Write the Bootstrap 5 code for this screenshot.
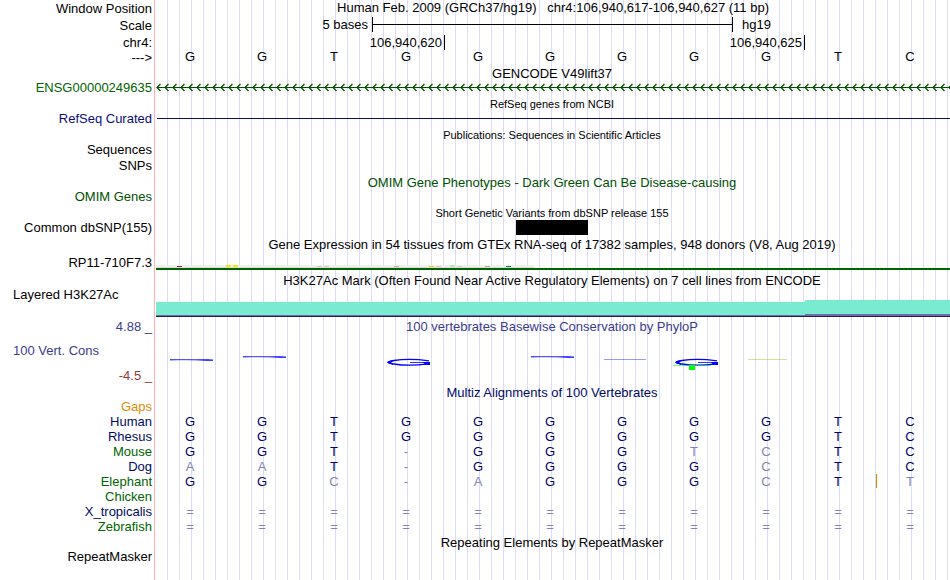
<!DOCTYPE html>
<html lang="en">
<head>
<meta charset="utf-8">
<meta name="viewport" content="width=device-width, initial-scale=1">
<title>Genome Browser - chr4:106,940,617-106,940,627</title>
<link href="https://cdn.jsdelivr.net/npm/bootstrap@5.3.0/dist/css/bootstrap.min.css" rel="stylesheet">
<style>
  body { font: 13px/15px "Liberation Sans", Arial, sans-serif; color: #000; background: #fff; }
  .browser {
    --label: 154px;
    background:
      linear-gradient(#ffb0b0, #ffb0b0) var(--label) 0 / 1px 100% no-repeat,
      repeating-linear-gradient(to right, transparent 0 11px, #dcdcf5 11px 12px) 156px 0 no-repeat;
  }
  .track { display: flex; min-height: 17px; }
  .track-name { flex: 0 0 156px; padding-right: 4px; text-align: right; white-space: nowrap; }
  .track-name.start { text-align: left; padding-left: 13px; }
  .track-data { flex: 1 1 0; min-width: 0; }
  .ruler .track-name { padding-top: 1px; }
  .track-title { height: 14px; margin: 0 2px 0 156px; font-size: 13px; font-weight: 400; line-height: 16px; text-align: center; white-space: nowrap; }
  .track-title.minor { font-size: 11px; line-height: 14px; }
  .bases { display: grid; grid-template-columns: repeat(11, 1fr); padding-right: 2px; }
  .letters { text-align: center; }
  .letters span { padding-right: 4px; }
  .span-3 { grid-column: span 3; } .span-4 { grid-column: span 4; } .span-5 { grid-column: span 5; }
  .before { text-align: right; padding-right: 4px; }
  .before.near { padding-right: 2px; }
  .tick { border-left: 1px solid #000; }
  .scale-line { height: 15px; border: solid #000; border-width: 0 0 0 1px; background: linear-gradient(#000, #000) 0 7px / 100% 1px no-repeat; }
  .scale-end { height: 15px; padding-left: 9px; }
  .snp { grid-column: 6; height: 15px; background: #000; }
  .h-14 { height: 14px; min-height: 0; } .h-16 { height: 16px; min-height: 0; } .h-18 { height: 18px; } .h-32 { height: 32px; }
  .refseq-line { height: 1px; margin: 7px 0 0 1px; background: #0c0c78; }
  svg { display: block; width: 100%; }
  .axis { height: 25px; }
  .axis.top { height: 24px; }
  .green { color: #006400; } .navy { color: #000a64; } .blue { color: #0c0c78; }
  .forest { color: #005000; } .slate { color: #3c3c8c; } .brown { color: #8c3c3c; } .orange { color: #e68a00; }
  .alignment table { width: 100%; table-layout: fixed; border-collapse: collapse; }
  .alignment .rows { padding-right: 2px; }
  .alignment th { width: 156px; height: 15px; padding: 0 4px 0 0; font-weight: 400; text-align: right; }
  .alignment td { height: 15px; padding: 0 4px 0 0; text-align: center; color: #000064; }
  .alignment td.off, .alignment tr.off td { color: #8585b2; }
  .alignment td.insert { background: linear-gradient(#e68200, #e68200) 0 0 / 1px 14px no-repeat; }
  .repeats { padding-top: 1px; }
</style>
<script src="https://cdn.jsdelivr.net/npm/bootstrap@5.3.0/dist/js/bootstrap.bundle.min.js"></script>
</head>
<body>
<main class="browser min-vh-100 overflow-hidden">

  <section class="ruler">
    <div class="track">
      <div class="track-name">Window Position</div>
      <div class="track-data text-center">Human Feb. 2009 (GRCh37/hg19) &nbsp; chr4:106,940,617-106,940,627 (11 bp)</div>
    </div>
    <div class="track h-18">
      <div class="track-name">Scale</div>
      <div class="track-data bases">
        <div class="span-3 before">5 bases</div>
        <div class="span-5 scale-line"></div>
        <div class="span-3 tick scale-end">hg19</div>
      </div>
    </div>
    <div class="track h-14">
      <div class="track-name pt-0">chr4:</div>
      <div class="track-data bases">
        <div class="span-4 before near">106,940,620</div>
        <div class="span-5 tick before near">106,940,625</div>
        <div class="tick"></div>
      </div>
    </div>
    <div class="track">
      <div class="track-name">---&gt;</div>
      <div class="track-data bases letters">
        <span>G</span><span>G</span><span>T</span><span>G</span><span>G</span><span>G</span><span>G</span><span>G</span><span>G</span><span>T</span><span>C</span>
      </div>
    </div>
  </section>

  <section>
    <h2 class="track-title">GENCODE V49lift37</h2>
    <div class="track green">
      <div class="track-name">ENSG00000249635</div>
      <div class="track-data">
        <svg height="15" aria-hidden="true">
          <defs>
            <pattern id="strand" width="8" height="15" patternUnits="userSpaceOnUse">
              <path d="M4.500 4 1 7.500 4.500 11" fill="none" stroke="#005000" stroke-width="1.300"/>
            </pattern>
          </defs>
          <rect width="100%" height="15" fill="url(#strand)"/>
          <rect x="1" y="7" width="100%" height="1" fill="#005000"/>
        </svg>
      </div>
    </div>
  </section>

  <section>
    <h2 class="track-title minor">RefSeq genes from NCBI</h2>
    <div class="track blue">
      <div class="track-name">RefSeq Curated</div>
      <div class="track-data"><div class="refseq-line"></div></div>
    </div>
  </section>

  <section>
    <h2 class="track-title minor">Publications: Sequences in Scientific Articles</h2>
    <div class="track h-16"><div class="track-name">Sequences</div></div>
    <div class="track"><div class="track-name">SNPs</div></div>
  </section>

  <section class="forest">
    <h2 class="track-title">OMIM Gene Phenotypes - Dark Green Can Be Disease-causing</h2>
    <div class="track"><div class="track-name">OMIM Genes</div></div>
  </section>

  <section>
    <h2 class="track-title minor">Short Genetic Variants from dbSNP release 155</h2>
    <div class="track">
      <div class="track-name">Common dbSNP(155)</div>
      <div class="track-data bases"><div class="snp"></div></div>
    </div>
  </section>

  <section>
    <h2 class="track-title h-18">Gene Expression in 54 tissues from GTEx RNA-seq of 17382 samples, 948 donors (V8, Aug 2019)</h2>
    <div class="track h-18">
      <div class="track-name">RP11-710F7.3</div>
      <div class="track-data">
        <svg height="18" viewBox="0 0 794 18" preserveAspectRatio="none" shape-rendering="crispEdges" aria-hidden="true">
          <rect y="10" width="378" height="2" fill="#f0f0f0"/>
          <rect y="12" width="378" height="1" fill="#dcdcdc"/>
          <rect x="21" y="11" width="5" height="1" fill="#8b1c62"/>
          <path fill="#eeee00" d="M70 10h5v2h-5zM77 10h5v2h-5z"/>
          <path fill="#dcc8c8" d="M161 11h5v1h-5zM168 11h5v1h-5z"/>
          <path fill="#bdb094" d="M238 11h5v1h-5zM329 11h5v1h-5z"/>
          <rect x="273" y="11" width="5" height="1" fill="#f0d000"/>
          <rect x="280" y="11" width="5" height="1" fill="#ffb6c1"/>
          <rect x="294" y="10" width="5" height="2" fill="#b4eeb4"/>
          <rect x="301" y="11" width="5" height="1" fill="#d3d3d3"/>
          <rect x="350" y="11" width="5" height="1" fill="#008b45"/>
          <rect y="13" width="794" height="2" fill="#006400"/>
        </svg>
      </div>
    </div>
  </section>

  <section>
    <h2 class="track-title">H3K27Ac Mark (Often Found Near Active Regulatory Elements) on 7 cell lines from ENCODE</h2>
    <div class="track h-32">
      <div class="track-name start">Layered H3K27Ac</div>
      <div class="track-data">
        <svg height="32" viewBox="0 0 794 32" preserveAspectRatio="none" shape-rendering="crispEdges" aria-hidden="true">
          <path fill="#78ebd0" d="M0 15h649v-2h145v16H0z"/>
          <path fill="#6e6eaa" d="M0 28h649v-1h145v2H0z"/>
          <rect y="29" width="794" height="1" fill="#1e1e50"/>
        </svg>
      </div>
    </div>
  </section>

  <section class="d-flex slate">
    <div class="track-name">
      <div class="axis top">4.88 _</div>
      <div class="axis text-start"><span class="track-name start">100 Vert. Cons</span></div>
      <div class="brown">-4.5 _</div>
    </div>
    <div class="track-data">
      <h2 class="track-title ms-0">100 vertebrates Basewise Conservation by PhyloP</h2>
      <svg height="52" viewBox="0 0 794 52" preserveAspectRatio="none" aria-hidden="true">
        <defs>
          <linearGradient id="fade">
            <stop offset="0" stop-color="#00f" stop-opacity=".7"/>
            <stop offset=".2" stop-color="#00f" stop-opacity=".45"/>
            <stop offset=".6" stop-color="#00f" stop-opacity=".5"/>
            <stop offset=".85" stop-color="#00f"/>
            <stop offset="1" stop-color="#00f"/>
          </linearGradient>
          <g id="stack">
            <path d="M42 1.800Q22-1 7 1.500Q-3 3.500 7 5Q22 7.500 41 4.800" fill="none" stroke="#00f" stroke-width="1.300"/>
            <path d="M6 1.500Q-5 3.300 6 5.200Q2 3.300 6 1.500z" fill="#00f" stroke="#00f"/>
            <path d="M23 3.500H38" stroke="#00f" stroke-width=".8"/>
            <path d="M36 3h7v3h-5z" fill="#00f"/>
          </g>
          <path id="low" d="M0 .2Q16-.4 38 .5L43 1v.8H35Q16 1 0 1.600z" fill="url(#fade)"/>
        </defs>
        <use href="#low" x="14" y="26"/>
        <use href="#low" x="87" y="23"/>
        <use href="#low" x="375" y="23"/>
        <rect x="14" y="26" width="43" height="1" fill="#00f" opacity=".4"/>
        <rect x="87" y="23" width="43" height="1" fill="#00f" opacity=".4"/>
        <rect x="375" y="23" width="43" height="1" fill="#00f" opacity=".4"/>
        <rect x="448" y="26" width="42" height="1" fill="#00f" opacity=".4"/>
        <use href="#stack" x="231" y="26"/>
        <use href="#stack" x="519" y="26"/>
        <rect x="517" y="32" width="38" height="1" fill="#0f0" opacity=".55"/>
        <rect x="533" y="32" width="6" height="5" fill="#0f0"/>
        <rect x="592" y="26" width="39" height="1" fill="#aa0" opacity=".4"/>
      </svg>
    </div>
  </section>

  <section class="alignment">
    <h2 class="track-title navy">Multiz Alignments of 100 Vertebrates</h2>
    <div class="rows">
    <table>
      <tbody>
        <tr><th scope="row" class="orange">Gaps</th><td></td><td></td><td></td><td></td><td></td><td></td><td></td><td></td><td></td><td></td><td></td></tr>
        <tr><th scope="row" class="navy">Human</th><td>G</td><td>G</td><td>T</td><td>G</td><td>G</td><td>G</td><td>G</td><td>G</td><td>G</td><td>T</td><td>C</td></tr>
        <tr><th scope="row" class="navy">Rhesus</th><td>G</td><td>G</td><td>T</td><td>G</td><td>G</td><td>G</td><td>G</td><td>G</td><td>G</td><td>T</td><td>C</td></tr>
        <tr><th scope="row" class="green">Mouse</th><td>G</td><td>G</td><td>T</td><td class="off">-</td><td>G</td><td>G</td><td>G</td><td class="off">T</td><td class="off">C</td><td>T</td><td>C</td></tr>
        <tr><th scope="row" class="navy">Dog</th><td class="off">A</td><td class="off">A</td><td>T</td><td class="off">-</td><td>G</td><td>G</td><td>G</td><td>G</td><td class="off">C</td><td>T</td><td>C</td></tr>
        <tr><th scope="row" class="green">Elephant</th><td>G</td><td>G</td><td class="off">C</td><td class="off">-</td><td class="off">A</td><td>G</td><td>G</td><td>G</td><td class="off">C</td><td>T</td><td class="off insert">T</td></tr>
        <tr><th scope="row" class="green">Chicken</th><td></td><td></td><td></td><td></td><td></td><td></td><td></td><td></td><td></td><td></td><td></td></tr>
        <tr class="off"><th scope="row" class="navy">X_tropicalis</th><td>=</td><td>=</td><td>=</td><td>=</td><td>=</td><td>=</td><td>=</td><td>=</td><td>=</td><td>=</td><td>=</td></tr>
        <tr class="off"><th scope="row" class="green">Zebrafish</th><td>=</td><td>=</td><td>=</td><td>=</td><td>=</td><td>=</td><td>=</td><td>=</td><td>=</td><td>=</td><td>=</td></tr>
      </tbody>
    </table>
    </div>
  </section>

  <section class="repeats">
    <h2 class="track-title">Repeating Elements by RepeatMasker</h2>
    <div class="track"><div class="track-name">RepeatMasker</div></div>
  </section>

</main>
</body>
</html>
